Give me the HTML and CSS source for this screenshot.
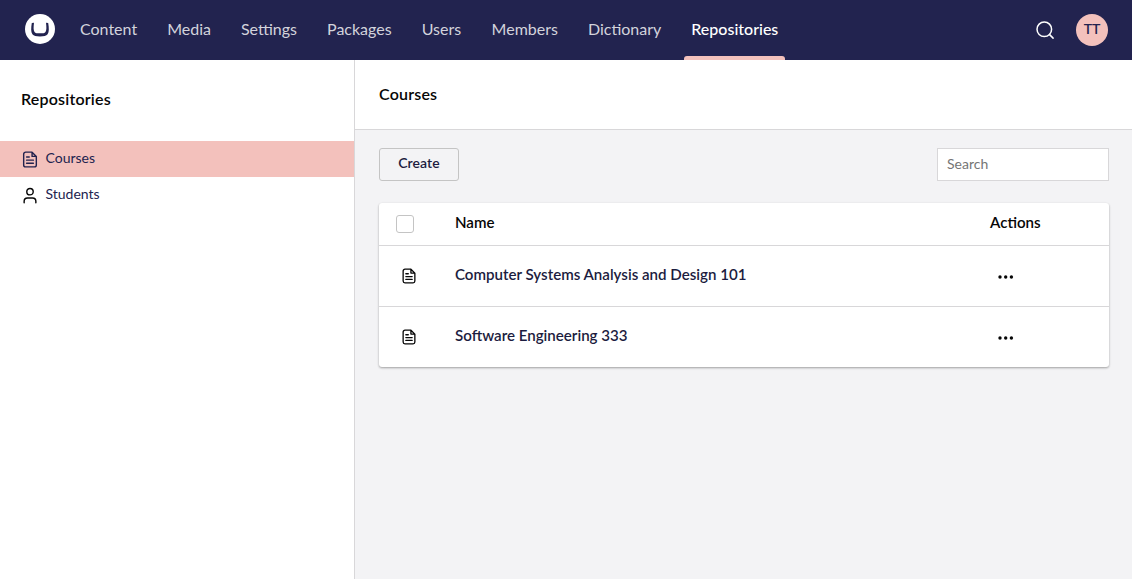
FILE: index.html
```html
<!DOCTYPE html>
<html lang="en">
<head>
<meta charset="utf-8">
<title>Repositories</title>
<link rel="stylesheet" href="styles.css">
</head>
<body>
<svg class="sprite" width="0" height="0" aria-hidden="true">
  <symbol id="doc" viewBox="0 0 16 18">
    <path d="M10.200 1.200H3.400A2.100 2.100 0 0 0 1.300 3.300v11.400a2.100 2.100 0 0 0 2.100 2.100h9.200a2.100 2.100 0 0 0 2.100-2.100V5.700zM10.200 1.400v4.300h4.300M4.400 6.400h2.800M4.400 9.700h7.200M4.400 12.900h7.200" fill="none" stroke="currentColor" stroke-width="1.500" stroke-linecap="round" stroke-linejoin="round"/>
  </symbol>
</svg>
<header class="topbar">
  <svg class="logo" viewBox="0 0 30 30"><circle cx="15" cy="15" r="15" fill="#fff"/><path d="M6.800 9C6 14 5.800 18 7.400 20.300C8.700 22.100 11 22.400 15 22.400s6.300-.3 7.600-2.100C24.200 18 24 14 23.200 9L21 8.800C21.500 13 21.700 16.300 20.500 17.900C19.600 19.100 18 19.300 15 19.300s-4.600-.2-5.500-1.400C8.300 16.300 8.500 13 9 8.800z" fill="#22234f"/></svg>
  <nav class="nav">
    <a>Content</a><a>Media</a><a>Settings</a><a>Packages</a><a>Users</a><a>Members</a><a>Dictionary</a><a class="active">Repositories</a>
  </nav>
  <svg class="search-icon" viewBox="0 0 20 20" fill="none" stroke="#fff" stroke-width="1.500" stroke-linecap="round"><circle cx="9.300" cy="9.300" r="7.300"/><path d="M14.600 14.600l3.500 3.500"/></svg>
  <div class="avatar">TT</div>
</header>
<div class="layout">
  <aside class="sidebar">
    <h2>Repositories</h2>
    <a class="item selected"><svg class="item-icon"><use href="#doc"/></svg>Courses</a>
    <a class="item"><svg class="item-icon" viewBox="0 0 16 18" fill="none" stroke="currentColor" stroke-width="1.500" stroke-linecap="round" stroke-linejoin="round"><circle cx="8" cy="4.900" r="3.400"/><path d="M1.800 16.600v-1.400a3.500 3.500 0 0 1 3.500-3.500h5.400a3.500 3.500 0 0 1 3.500 3.500v1.400"/></svg>Students</a>
  </aside>
  <main class="main">
    <div class="heading">Courses</div>
    <div class="content">
      <div class="toolbar"><button class="create">Create</button><input class="search" placeholder="Search"></div>
      <div class="table">
        <div class="row head"><span class="check"></span><span class="name">Name</span><span class="actions">Actions</span></div>
        <div class="row"><svg class="row-icon"><use href="#doc"/></svg><span class="name">Computer Systems Analysis and Design 101</span><svg class="dots" viewBox="0 0 16 4"><circle cx="2" cy="2" r="1.700"/><circle cx="7.700" cy="2" r="1.700"/><circle cx="13.400" cy="2" r="1.700"/></svg></div>
        <div class="row"><svg class="row-icon"><use href="#doc"/></svg><span class="name">Software Engineering 333</span><svg class="dots" viewBox="0 0 16 4"><circle cx="2" cy="2" r="1.700"/><circle cx="7.700" cy="2" r="1.700"/><circle cx="13.400" cy="2" r="1.700"/></svg></div>
      </div>
    </div>
  </main>
</div>
</body>
</html>
```
FILE: styles.css
```css
* { box-sizing: border-box; }
body { margin: 0; height: 579px; overflow: hidden; display: flex; flex-direction: column; font-family: Lato, "Liberation Sans", sans-serif; font-size: 15px; color: #1c1c40; background: #fff; }
.sprite { position: absolute; }
.topbar { height: 60px; flex: none; background: #22234f; display: flex; align-items: center; padding: 0 24px 0 25px; }
.logo { width: 30px; height: 30px; margin: -2px 10px 0 0; }
.nav { display: flex; height: 60px; flex: 1; }
.nav a { padding: 0 15px; line-height: 57px; font-size: 16px; color: #d3d3dc; white-space: nowrap; }
.nav a:nth-child(6) { margin-left: 0.5px; }
.nav .active { color: #fff; padding: 0 7px; margin-left: 8px; font-weight: 500; display: flex; flex-direction: column; }
.nav .active::after { content: ""; height: 4px; margin: -1px -7px 0; background: #f3c1bc; border-radius: 3px 3px 0 0; }
.search-icon { width: 20px; height: 20px; margin-right: 21px; }
.avatar { width: 32px; height: 32px; border-radius: 50%; background: #f3c1bc; color: #22234f; font-weight: 600; font-size: 14px; line-height: 29px; text-align: center; }
.layout { display: flex; flex: 1; }
.sidebar { width: 355px; flex: none; border-right: 1px solid #d8d7d9; }
.sidebar h2 { margin: 0; height: 81px; line-height: 77px; padding-left: 21px; font-size: 16px; font-weight: 600; letter-spacing: 0.2px; color: #060606; }
.item { display: flex; align-items: center; height: 36px; padding: 0 0 3px 22px; font-size: 14px; color: #22234f; }
.item.selected { background: #f3c1bc; }
.item-icon { width: 16px; height: 17px; margin: 4px 7.500px 0 0; color: #22234f; }
.item:not(.selected) .item-icon { color: #060606; }
.main { flex: 1; display: flex; flex-direction: column; }
.heading { height: 70px; line-height: 67px; padding-left: 24px; border-bottom: 1px solid #d8d7d9; color: #060606; font-size: 16px; font-weight: 600; letter-spacing: 0.2px; }
.content { flex: 1; background: #f3f3f5; padding: 18px 23px 0 24px; }
.toolbar { display: flex; justify-content: space-between; height: 33px; margin-bottom: 22px; }
.create { width: 80px; height: 33px; border: 1px solid #c4c4c4; border-radius: 3px; background: #f3f3f5; color: #1c1c40; font: 600 14px Lato, sans-serif; letter-spacing: 0.1px; padding: 0 0 5px; }
.search { width: 172px; height: 33px; border: 1px solid #d8d7d9; padding: 0 9px 3px; font: 14px Lato, sans-serif; border-radius: 0; }
.search::placeholder { color: #757575; }
.table { background: #fff; border-radius: 3px; box-shadow: 0 1px 3px rgba(0,0,0,.12), 0 1px 2px rgba(0,0,0,.24); }
.row { display: grid; grid-template-columns: 76px 1fr 119px; align-items: center; height: 61px; border-bottom: 1px solid #d8d7d9; }
.row:last-child { border-bottom: 0; height: 60px; }
.head { height: 43px; color: #060606; }
.name, .actions { font-weight: 600; padding-bottom: 5px; font-size: 15.100px; }
.check { width: 18px; height: 18px; border: 1px solid #c4c4c4; border-radius: 3px; margin-left: 17px; }
.row-icon { width: 14px; height: 16px; margin: 0 0 1px 23px; color: #060606; }
.dots { width: 16px; height: 4px; margin: 1px 0 0 8px; fill: #060606; }
```
